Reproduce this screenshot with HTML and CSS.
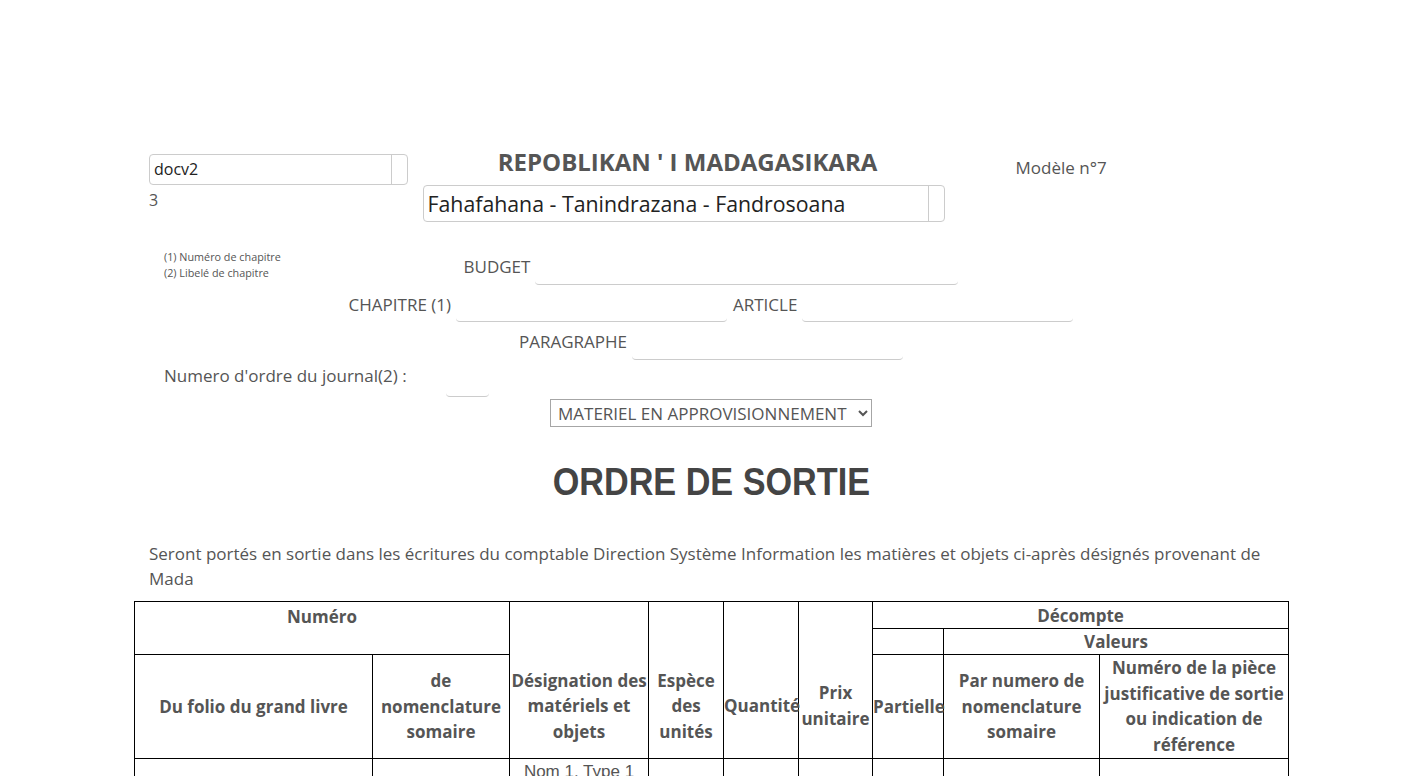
FILE: index.html
```html
<!DOCTYPE html>
<html lang="fr">
<head>
<meta charset="utf-8">
<title>Ordre de sortie</title>
<link rel="stylesheet" href="styles.css">
</head>
<body>
<div class="page">
  <div class="head">
    <div class="col-left">
      <div class="field-box docv"><span class="field-text">docv2</span><span class="addon"></span></div>
      <div class="num">3</div>
    </div>
    <div class="col-center">
      <h1 class="republic">REPOBLIKAN ' I MADAGASIKARA</h1>
      <div class="field-box motto"><span class="field-text">Fahafahana - Tanindrazana - Fandrosoana</span><span class="addon"></span></div>
    </div>
    <div class="col-right">Modèle n°7</div>
  </div>

  <div class="budget-row">
    <div class="notes">
      <div>(1) Numéro de chapitre</div>
      <div>(2) Libelé de chapitre</div>
    </div>
    <div class="line">
      <span class="lbl">BUDGET</span><span class="uline w-budget"></span>
    </div>
    <div></div>
  </div>
  <div class="line">
    <span class="lbl">CHAPITRE (1)</span><span class="uline w-std"></span>
    <span class="lbl">ARTICLE</span><span class="uline w-std"></span>
  </div>
  <div class="line">
    <span class="lbl">PARAGRAPHE</span><span class="uline w-std"></span>
  </div>
  <div class="journal">
    <span class="journal-lbl">Numero d'ordre du journal(2) :</span><span class="uline w-small"></span>
  </div>
  <div class="select-row">
    <select class="kind">
      <option>MATERIEL EN APPROVISIONNEMENT</option>
    </select>
  </div>
  <div class="ordre-row"><span class="ordre">ORDRE DE SORTIE</span></div>
  <p class="intro">Seront portés en sortie dans les écritures du comptable Direction Système Information les matières et objets ci-après désignés provenant de Mada</p>

  <table class="grid">
    <colgroup>
      <col class="c1"><col class="c2"><col class="c3"><col class="c4"><col class="c5"><col class="c6"><col class="c7"><col class="c8"><col class="c9">
    </colgroup>
    <thead>
      <tr class="r1">
        <th colspan="2" rowspan="2" class="top">Numéro</th>
        <th rowspan="2" class="open-bottom"></th>
        <th rowspan="2" class="open-bottom"></th>
        <th rowspan="2" class="open-bottom"></th>
        <th rowspan="2" class="open-bottom"></th>
        <th colspan="3">Décompte</th>
      </tr>
      <tr class="r2">
        <th></th>
        <th colspan="2">Valeurs</th>
      </tr>
      <tr class="r3">
        <th>Du folio du grand livre</th>
        <th>de nomenclature somaire</th>
        <th class="open-top">Désignation des matériels et objets</th>
        <th class="open-top">Espèce des unités</th>
        <th class="open-top nowrap">Quantité</th>
        <th class="open-top">Prix unitaire</th>
        <th class="nowrap">Partielle</th>
        <th>Par numero de nomenclature somaire</th>
        <th>Numéro de la pièce justificative de sortie ou indication de référence</th>
      </tr>
    </thead>
    <tbody>
      <tr>
        <td></td><td></td><td>Nom 1, Type 1</td><td></td><td></td><td></td><td></td><td></td><td></td>
      </tr>
    </tbody>
  </table>
</div>
</body>
</html>
```

FILE: styles.css
```css
html, body {
  margin: 0;
  padding: 0;
  background: #fff;
}
body {
  font-family: "Open Sans", "Noto Sans", sans-serif;
  color: #555;
  font-size: 16px;
}
.page {
  width: 1154px;
  margin-left: calc(50% - 578px);
  padding-top: 154px;
}
.head {
  display: grid;
  grid-template-columns: 288.5px 522px 1fr;
  align-items: start;
}
.col-left {
  padding: 0 15px;
}
.field-box {
  display: flex;
  border: 1px solid #ccc;
  border-radius: 4px;
  box-sizing: border-box;
  color: #222;
}
.field-text {
  flex: 1;
  padding-left: 4px;
  white-space: nowrap;
  overflow: hidden;
}
.addon {
  width: 15px;
  border-left: 1px solid #ccc;
}
.docv {
  height: 31px;
  line-height: 29px;
  font-size: 16px;
}
.num {
  margin-top: 3px;
  line-height: 24px;
  font-size: 16px;
}
.republic {
  margin: -5px 0 10px;
  font-size: 24px;
  line-height: 26px;
  font-weight: 700;
  text-align: center;
  padding-left: 8px;
  color: #555;
}
.motto {
  height: 37px;
  line-height: 35px;
  font-size: 21.3px;
}
.motto .field-text {
  padding-left: 4px;
}
.col-right {
  padding-left: 71px;
  padding-top: 1px;
  font-size: 17px;
  line-height: 25px;
}
.budget-row {
  margin-top: 27px;
  display: grid;
  grid-template-columns: 1fr auto 1fr;
  align-items: start;
}
.notes {
  padding-left: 30px;
  font-size: 10.8px;
  line-height: 16px;
}
.line {
  display: flex;
  justify-content: center;
  align-items: center;
  height: 37.5px;
  font-size: 17px;
}
.lbl {
  margin-right: 5px;
  line-height: 25px;
  position: relative;
  top: -1px;
}
.uline {
  display: inline-block;
  height: 34px;
  box-sizing: border-box;
  border-bottom: 1px solid #ccc;
  border-radius: 4px;
}
.uline + .lbl {
  margin-left: 6px;
}
.w-budget { width: 423px; }
.w-std { width: 271px; }
.w-small { width: 43px; }
.journal {
  display: flex;
  align-items: flex-start;
  margin-top: 1.5px;
  padding-left: 30px;
  font-size: 17px;
}
.journal-lbl {
  width: 282px;
  line-height: 25px;
}
.select-row {
  margin-top: 2px;
  height: 28px;
  text-align: center;
}
.kind {
  width: 322px;
  height: 28px;
  border: 1px solid #a6a6a6;
  border-radius: 0;
  background: #fff;
  color: #555;
  font-family: "Open Sans", "Noto Sans", sans-serif;
  font-size: 17px;
  padding: 0 0 0 3px;
  margin: 0;
  vertical-align: top;
}
.ordre-row {
  margin-top: 33px;
  text-align: center;
  height: 44px;
}
.ordre {
  display: inline-block;
  font-family: "Liberation Sans", Arial, sans-serif;
  font-weight: 700;
  font-size: 38px;
  line-height: 44px;
  color: #444;
  transform: scaleX(0.9);
}
.intro {
  margin: 37px 0 10px;
  padding: 0 15px;
  font-size: 17px;
  line-height: 25px;
}
.grid {
  width: 1154px;
  border-collapse: collapse;
  table-layout: fixed;
}
.c1 { width: 238px; }
.c2 { width: 137px; }
.c3 { width: 139px; }
.c4 { width: 75px; }
.c5 { width: 75px; }
.c6 { width: 74px; }
.c7 { width: 71px; }
.c8 { width: 156px; }
.c9 { width: 189px; }
.grid th, .grid td {
  border: 1px solid #000;
  padding: 0;
}
.grid th {
  font-size: 17px;
  font-weight: 700;
  line-height: 26px;
  text-align: center;
  vertical-align: middle;
  color: #555;
}
.grid .r1 th {
  height: 24px;
  line-height: 24px;
  padding-top: 2px;
}
.grid .r2 th {
  height: 25px;
  line-height: 25px;
}
.grid .r3 th {
  line-height: 25.7px;
}
.grid th.top {
  vertical-align: top;
  padding-top: 2px;
  line-height: 26px;
}
.grid th.open-bottom {
  border-bottom-style: hidden;
}
.grid th.open-top {
  border-top-style: hidden;
}
.grid th.nowrap {
  white-space: nowrap;
}
.grid td {
  height: 40px;
  vertical-align: top;
  text-align: center;
  font-family: "Liberation Sans", Arial, sans-serif;
  font-size: 17px;
  line-height: 22px;
  padding-top: 2px;
}
```
